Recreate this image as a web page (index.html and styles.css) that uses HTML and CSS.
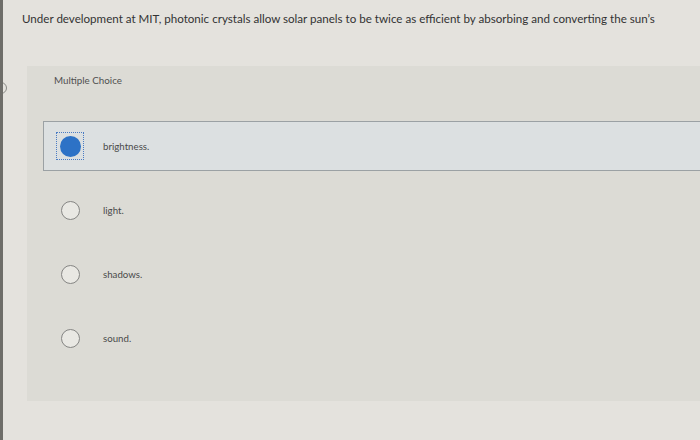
FILE: index.html
```html
<!DOCTYPE html>
<html>
<head>
<meta charset="utf-8">
<link rel="stylesheet" href="styles.css">
</head>
<body>
<div class="edge-dot"></div>
<p class="question">Under development at MIT, photonic crystals allow solar panels to be twice as efficient by absorbing and converting the sun’s</p>
<section class="panel">
  <div class="label">Multiple Choice</div>
  <div class="options">
    <div class="option selected">
      <span class="radio-wrap"><span class="radio on"></span></span>
      <span class="text">brightness.</span>
    </div>
    <div class="option">
      <span class="radio-wrap"><span class="radio"></span></span>
      <span class="text">light.</span>
    </div>
    <div class="option">
      <span class="radio-wrap"><span class="radio"></span></span>
      <span class="text">shadows.</span>
    </div>
    <div class="option">
      <span class="radio-wrap"><span class="radio"></span></span>
      <span class="text">sound.</span>
    </div>
  </div>
</section>
</body>
</html>
```
FILE: styles.css
```css
html, body {
  margin: 0;
  padding: 0;
}
body {
  width: 697px;
  height: 440px;
  background: #e4e2dd;
  border-left: 3px solid #6e6d69;
  font-family: Lato, "Open Sans", sans-serif;
  color: #3d3d3d;
  position: relative;
  overflow: hidden;
}
.edge-dot {
  position: absolute;
  left: -8px;
  top: 82px;
  width: 10px;
  height: 10px;
  border: 1px solid #8a8a86;
  border-radius: 50%;
}
.question {
  margin: 0;
  padding: 12px 0 0 19px;
  font-size: 11.6px;
  line-height: 13px;
  color: #333;
}
.panel {
  margin: 41px 0 0 24px;
  height: 335px;
  background: #dcdbd5;
  padding-top: 8px;
  box-sizing: border-box;
}
.label {
  padding-left: 27px;
  font-size: 9.8px;
  line-height: 12px;
  color: #505050;
}
.options {
  margin: 35px 0 0 16px;
  display: flex;
  flex-direction: column;
  gap: 14px;
}
.option {
  height: 50px;
  display: flex;
  align-items: center;
  border: 1px solid transparent;
  border-right: none;
  box-sizing: border-box;
}
.option.selected {
  background: #dce0e1;
  border-color: #9ba1a4;
}
.radio-wrap {
  width: 26px;
  height: 26px;
  margin-left: 13px;
  display: flex;
  align-items: center;
  justify-content: center;
  box-sizing: border-box;
}
.selected .radio-wrap {
  outline: 1px dotted #4a7cc4;
}
.radio {
  width: 19px;
  height: 19px;
  border-radius: 50%;
  border: 1px solid #858583;
  background: #e9e8e3;
  box-sizing: border-box;
}
.radio.on {
  width: 21px;
  height: 21px;
  border: none;
  background: #2d72c6;
}
.text {
  margin-left: 20px;
  font-size: 9.7px;
  color: #4a4a4a;
}
```
